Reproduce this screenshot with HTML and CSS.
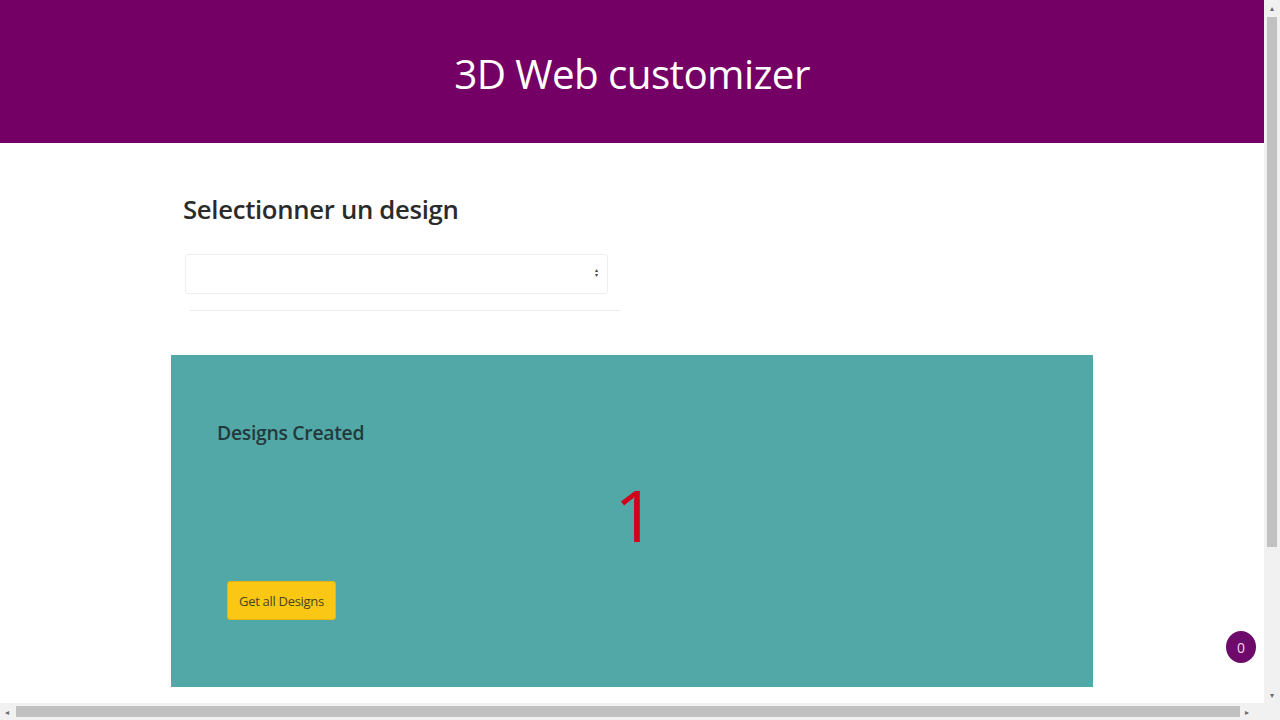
FILE: index.html
```html
<!DOCTYPE html>
<html lang="fr">
<head>
<meta charset="UTF-8" />
<meta name="viewport" content="width=device-width, initial-scale=1" />
<title>3D Web customizer</title>
<link rel="stylesheet" href="styles.css">
</head>
<body>
<header class="topbar">
  <h1 class="title">3D Web customizer</h1>
</header>

<main class="content">
  <section class="picker">
    <h2 class="picker-title">Selectionner un design</h2>
    <div class="select-wrap">
      <select class="design-select" aria-label="Design">
        <option></option>
      </select>
    </div>
    <div class="picker-line"></div>
  </section>

  <section class="stats-card">
    <h3 class="stats-title">Designs Created</h3>
    <div class="stats-count">1</div>
    <button type="button" class="btn-designs">Get all Designs</button>
  </section>
</main>

<div class="cart-badge">0</div>

<!-- window scrollbars as seen in the capture -->
<div class="vscroll" aria-hidden="true">
  <span class="arrow">&#9652;</span>
  <span class="vthumb"></span>
  <span class="arrow arrow-bottom">&#9662;</span>
</div>
<div class="hscroll" aria-hidden="true">
  <span class="arrow">&#9666;</span>
  <span class="hthumb"></span>
  <span class="arrow">&#9656;</span>
</div>
</body>
</html>
```

FILE: styles.css
```css
/* --- RESET & BASE --- */
*, *::before, *::after {
  box-sizing: border-box;
}
body {
  margin: 0;
  font-family: 'Open Sans', 'Noto Sans', sans-serif;
  background: #fff;
}
/* --- HEADER --- */
.topbar {
  background: #750065;
  height: 143px;
  width: 1264px;
  display: flex;
  justify-content: center;
  align-items: center;
  padding-top: 4px;
}
.title {
  margin: 0;
  color: #fff;
  font-weight: 400;
  font-size: 40.4px;
  letter-spacing: -0.6px;
}
/* --- CONTENT --- */
.content {
  width: 922px;
  margin-left: 171px;
}
.picker {
  padding: 49px 0 0 12px;
}
.picker-title {
  margin: 0;
  font-size: 25.7px;
  font-weight: 600;
  color: #2b2b2b;
  letter-spacing: -0.3px;
  line-height: 36px;
}
.select-wrap {
  position: relative;
  margin-top: 26px;
  margin-left: 2px;
  width: 423px;
}
.design-select {
  width: 100%;
  height: 40px;
  border: 1px solid #eef0f0;
  border-radius: 3px;
  background: #fff;
  appearance: none;
  padding: 0 12px;
}
.select-wrap::after {
  content: "\25B4\A\25BE";
  white-space: pre;
  position: absolute;
  right: 10px;
  top: 14px;
  font-size: 6px;
  line-height: 5px;
  color: #444;
}
.picker-line {
  width: 430px;
  margin: 16px 0 0 7px;
  border-top: 1px solid #eceeee;
}
/* --- STATS CARD --- */
.stats-card {
  margin-top: 44px;
  background: #52a8a7;
  height: 332px;
  padding: 64px 46px 0;
  display: flex;
  flex-direction: column;
}
.stats-title {
  margin: 0;
  font-size: 19.4px;
  font-weight: 600;
  color: #233a3c;
  letter-spacing: -0.3px;
}
.stats-count {
  align-self: center;
  margin-top: 32px;
  padding-left: 6px;
  font-size: 72px;
  line-height: 72px;
  color: #d2001a;
  font-weight: 400;
}
.btn-designs {
  align-self: flex-start;
  margin: 31px 0 0 10px;
  background: #fbc715;
  border: 1px solid #e8b50c;
  border-radius: 3px;
  width: 109px;
  height: 39px;
  font-family: inherit;
  font-size: 13px;
  color: #4a4420;
  padding: 0;
  letter-spacing: -0.3px;
}
/* --- BADGE --- */
.cart-badge {
  position: fixed;
  left: 1226px;
  top: 631px;
  width: 30px;
  height: 32px;
  border-radius: 50%;
  background: #6e0a6a;
  color: #f3d8ef;
  font-size: 14px;
  display: flex;
  align-items: center;
  justify-content: center;
}
/* --- SCROLLBARS --- */
.vscroll {
  position: fixed;
  top: 0;
  right: 0;
  width: 16px;
  height: 703px;
  background: #f1f1f1;
  display: flex;
  flex-direction: column;
  align-items: center;
}
.vthumb {
  width: 10px;
  height: 530px;
  background: #c1c1c1;
  margin-top: 1px;
}
.arrow-bottom {
  margin-top: auto;
}
.hscroll {
  position: fixed;
  left: 0;
  bottom: 0;
  width: 1280px;
  height: 17px;
  background: #f1f1f1;
  display: flex;
  align-items: center;
  padding-right: 16px;
}
.hthumb {
  flex: 0 0 1224px;
  height: 11px;
  background: #c1c1c1;
  margin-left: 2px;
}
.arrow {
  width: 14px;
  font-size: 8px;
  line-height: 16px;
  color: #6b6b6b;
  text-align: center;
}
```
